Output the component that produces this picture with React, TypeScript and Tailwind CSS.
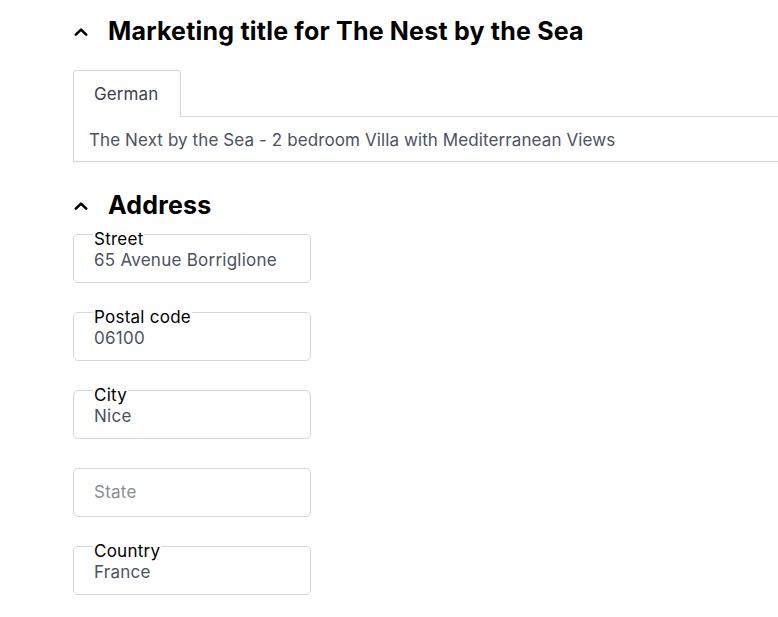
import React from "react";

const font = { fontFamily: "Inter, 'Noto Sans', sans-serif" };

function Chevron() {
  return (
    <svg width="16" height="10" viewBox="0 0 16 10" className="shrink-0">
      <path d="M2.8 7.6 L8 2.6 L13.2 7.6" fill="none" stroke="#000" strokeWidth="2.6" strokeLinecap="round" strokeLinejoin="round" />
    </svg>
  );
}

function Field({ label, value }: { label: string; value: string }) {
  return (
    <div className="relative w-[238px] h-[49px] border border-[#d4d6dc] rounded-[5px] pl-[20px] pt-[15px]">
      <span className="absolute left-[19px] top-[-4px] px-[1px] bg-white text-[17px] leading-[16px] text-black tracking-[0.25px]">{label}</span>
      <div className="text-[17px] leading-[20px] text-[#4a5263] tracking-[0.25px]">{value}</div>
    </div>
  );
}

export default function App() {
  return (
    <div className="w-[778px] h-[617px] overflow-hidden bg-white pl-[73px]" style={font}>
      <div className="flex items-center h-[30px] mt-[17px]">
        <div className="w-[35px] flex items-center"><Chevron /></div>
        <h1 className="text-[25px] font-bold text-black tracking-[0.2px]">Marketing title for The Nest by the Sea</h1>
      </div>
      <div className="mt-[23px] w-[760px]">
        <div className="flex">
          <div className="w-[108px] h-[47px] border border-b-0 border-[#d4d6dc] rounded-t-[4px] flex items-center pl-[20px] pt-[2px] text-[17px] text-[#3d4250] tracking-[0.1px]">German</div>
          <div className="flex-1 border-b border-[#d4d6dc]" />
        </div>
        <div className="h-[45px] border-l border-b border-[#d4d6dc] flex items-center pl-[15px] pt-[3px] text-[17px] text-[#4a5263] tracking-[0.1px]">
          The Next by the Sea - 2 bedroom Villa with Mediterranean Views
        </div>
      </div>
      <div className="flex items-center h-[30px] mt-[29px]">
        <div className="w-[35px] flex items-center"><Chevron /></div>
        <h2 className="text-[25px] font-bold text-black tracking-[0.2px]">Address</h2>
      </div>
      <div className="flex flex-col gap-[29px] mt-[13px]">
        <Field label="Street" value="65 Avenue Borriglione" />
        <Field label="Postal code" value="06100" />
        <Field label="City" value="Nice" />
        <div className="w-[238px] h-[49px] border border-[#d4d6dc] rounded-[5px] pl-[20px] pt-[1px] flex items-center text-[17px] text-[#8a8d94] tracking-[0.25px]">State</div>
        <Field label="Country" value="France" />
      </div>
    </div>
  );
}
